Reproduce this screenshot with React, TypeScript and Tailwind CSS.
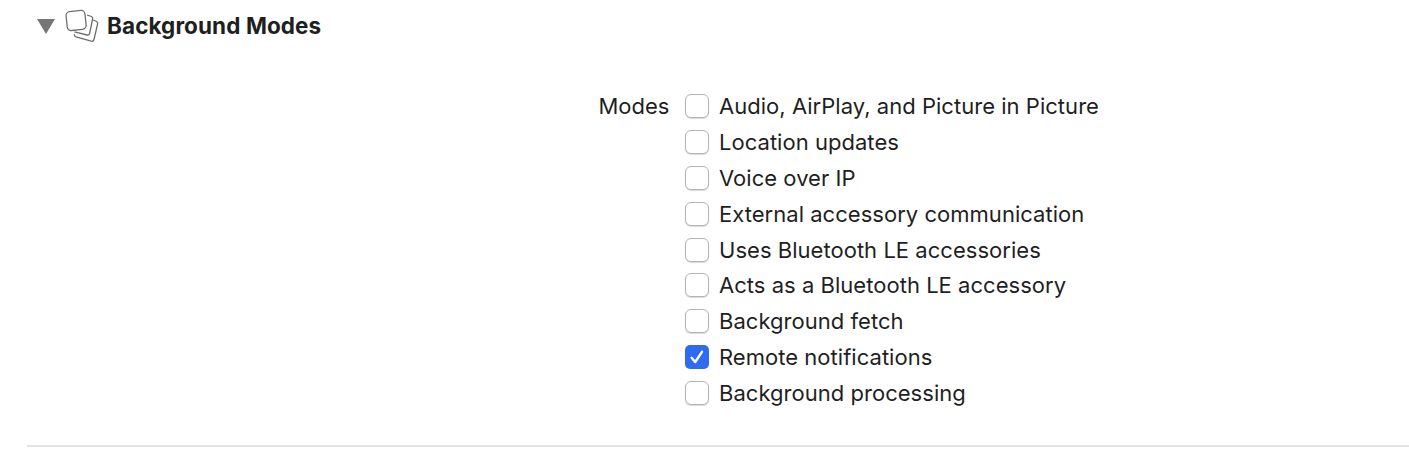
import React from "react";

const modes: [string, boolean][] = [
  ["Audio, AirPlay, and Picture in Picture", false],
  ["Location updates", false],
  ["Voice over IP", false],
  ["External accessory communication", false],
  ["Uses Bluetooth LE accessories", false],
  ["Acts as a Bluetooth LE accessory", false],
  ["Background fetch", false],
  ["Remote notifications", true],
  ["Background processing", false],
];

function Box({ checked }: { checked: boolean }) {
  if (checked) {
    return (
      <span className="flex h-[24px] w-[24px] shrink-0 items-center justify-center rounded-[5px] bg-[#2f6bf0]">
        <svg width="18" height="18" viewBox="0 0 18 18" fill="none">
          <path d="M3.6 9.8 L7.2 14 L14 3.8" stroke="#fff" strokeWidth="2.4" strokeLinecap="round" strokeLinejoin="round" />
        </svg>
      </span>
    );
  }
  return <span className="h-[24px] w-[24px] shrink-0 rounded-[6px] border border-[#b4b4b4] bg-white shadow-[0_1px_1px_rgba(0,0,0,0.15)]" />;
}

export default function App() {
  return (
    <div className="h-[454px] w-[1409px] overflow-hidden bg-white font-['Inter',sans-serif] text-[#1f1f1f]">
      <div className="flex items-center pl-[37px] pt-[9px]">
        <svg width="18" height="15" viewBox="0 0 18 15" className="shrink-0">
          <path d="M0 0 H18 L9 15 Z" fill="#767676" />
        </svg>
        <svg width="34" height="34" viewBox="0 0 34 34" fill="none" className="ml-[10px] shrink-0" stroke="#6e6e6e" strokeWidth="1.3">
          <path d="M22 6 L26.5 7.5 Q28 8.3 27.6 10 L24.6 24.5 Q24 26.5 22 26 L9.5 22.8" />
          <path d="M28.2 11 L31.5 12.5 Q33 13.3 32.6 15 L29 30.5 Q28.4 32.7 26.3 32.2 L11 27.8 Q9.2 27.2 9.2 25.3" />
          <rect x="1.6" y="2" width="19" height="19" rx="4" transform="rotate(-6 11 11.5)" fill="#fff" />
        </svg>
        <h1 className="ml-[8px] text-[22.5px] font-bold leading-[34px] tracking-[0.09px] text-[#1f1f1f]">Background Modes</h1>
      </div>
      <div className="mt-[45.08px] flex items-start pl-[598.5px]">
        <span className="w-[86.5px] text-[22px] leading-[36px]">Modes</span>
        <ul className="flex flex-col">
          {modes.map(([label, checked]) => (
            <li key={label} className="flex h-[35.875px] items-center gap-[10px]">
              <Box checked={checked} />
              <span className="whitespace-nowrap text-[22px] leading-[36px] tracking-[0.03px]">{label}</span>
            </li>
          ))}
        </ul>
      </div>
      <div className="ml-[27px] mt-[34px] h-[2px] bg-[#e3e3e3]" />
    </div>
  );
}
